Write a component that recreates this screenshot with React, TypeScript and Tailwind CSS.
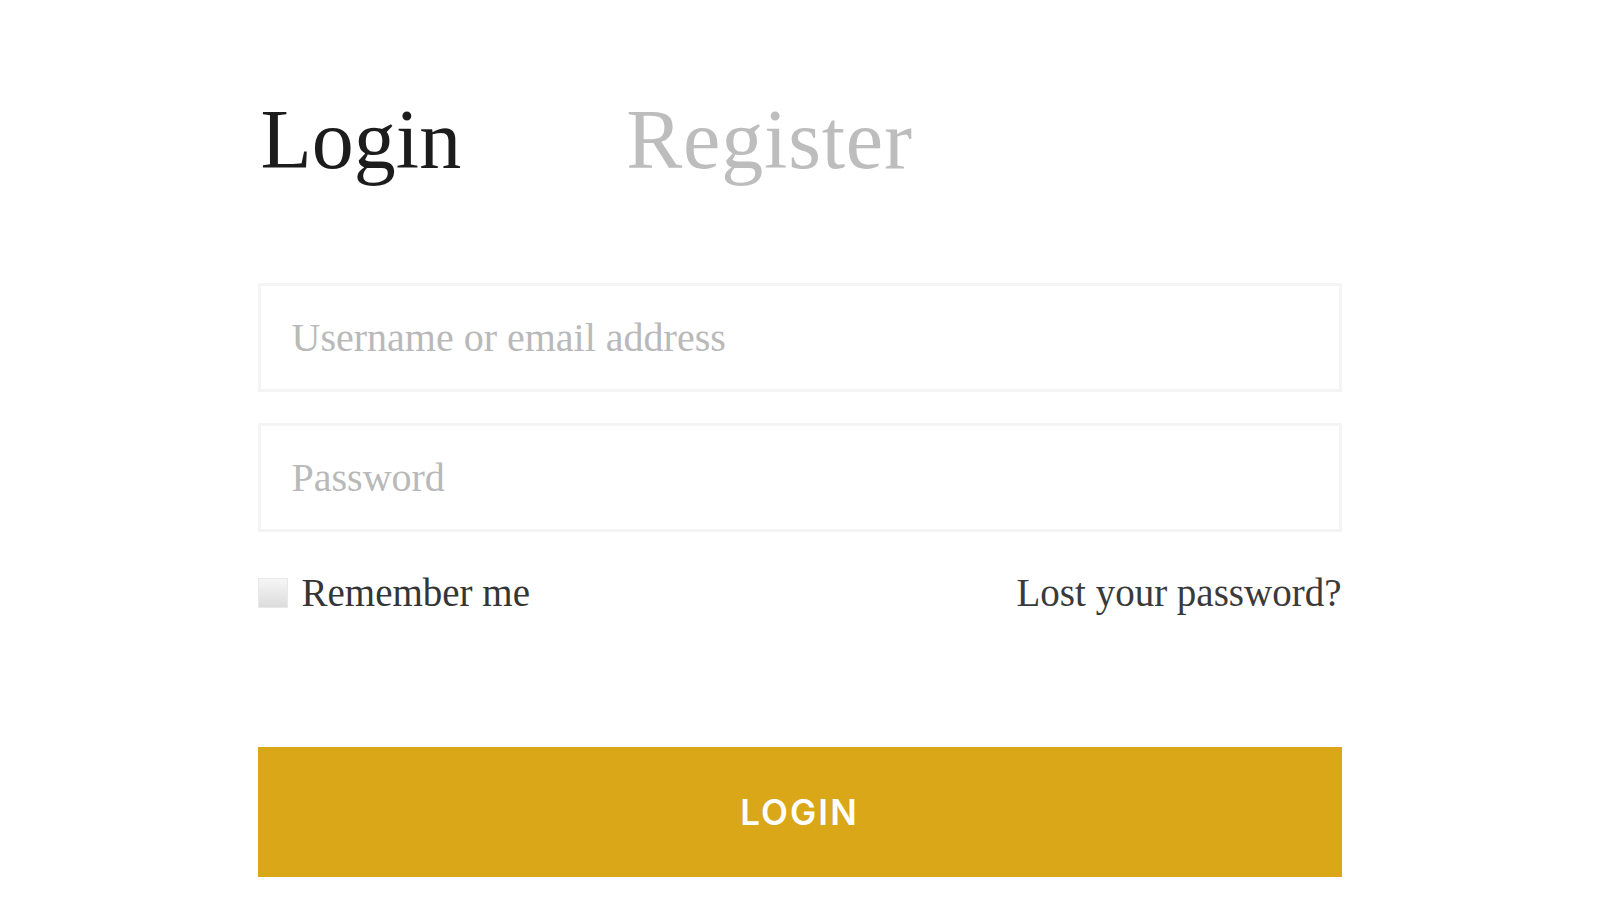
import React, { useState } from 'react';

export default function App() {
  const [tab, setTab] = useState<'login' | 'register'>('login');
  const [remember, setRemember] = useState(false);

  return (
    <div className="min-h-screen bg-white flex justify-center" style={{ fontFamily: '"Liberation Serif", serif' }}>
      <div className="w-[1084px] pt-[98px]">
        {/* Tabs */}
        <div className="flex gap-[165px] pl-[3px]">
          <button
            onClick={() => setTab('login')}
            className={`text-[84px] leading-none ${tab === 'login' ? 'text-[#1c1c1c]' : 'text-[#bdbdbd]'}`}
          >
            Login
          </button>
          <button
            onClick={() => setTab('register')}
            className={`text-[84px] leading-none tracking-[0.01em] ${tab === 'register' ? 'text-[#1c1c1c]' : 'text-[#bdbdbd]'}`}
          >
            Register
          </button>
        </div>

        {/* Fields */}
        <form className="mt-[101px] flex flex-col" onSubmit={(e) => e.preventDefault()}>
          <input
            type="text"
            placeholder="Username or email address"
            className="h-[109px] w-full border-[3px] border-[#f4f4f4] bg-white pl-[31px] text-[40px] text-[#333] placeholder:text-[#b9b9b9] outline-none"
          />
          <input
            type="password"
            placeholder="Password"
            className="mt-[31px] h-[109px] w-full border-[3px] border-[#f4f4f4] bg-white pl-[31px] text-[40px] text-[#333] placeholder:text-[#b9b9b9] outline-none"
          />

          <div className="mt-[41px] flex items-center justify-between">
            <label className="flex items-center gap-[14px] cursor-pointer">
              <span
                onClick={() => setRemember(!remember)}
                className="w-[30px] h-[30px] border border-[#e8e8e8] bg-gradient-to-b from-[#f6f6f6] to-[#dcdcdc] flex items-center justify-center text-[#555] text-[22px] leading-none"
              >
                {remember ? '✓' : ''}
              </span>
              <span className="text-[39px] leading-none text-[#353535]">Remember me</span>
            </label>
            <a href="#" className="text-[39px] leading-none text-[#3a3a3a]">
              Lost your password?
            </a>
          </div>

          <button
            type="submit"
            className="mt-[135px] h-[130px] w-full bg-[#d9a717] text-white text-[35px] font-semibold tracking-[0.06em]"
            style={{ fontFamily: 'Inter, "Open Sans", sans-serif' }}
          >
            LOGIN
          </button>
        </form>
      </div>
    </div>
  );
}
